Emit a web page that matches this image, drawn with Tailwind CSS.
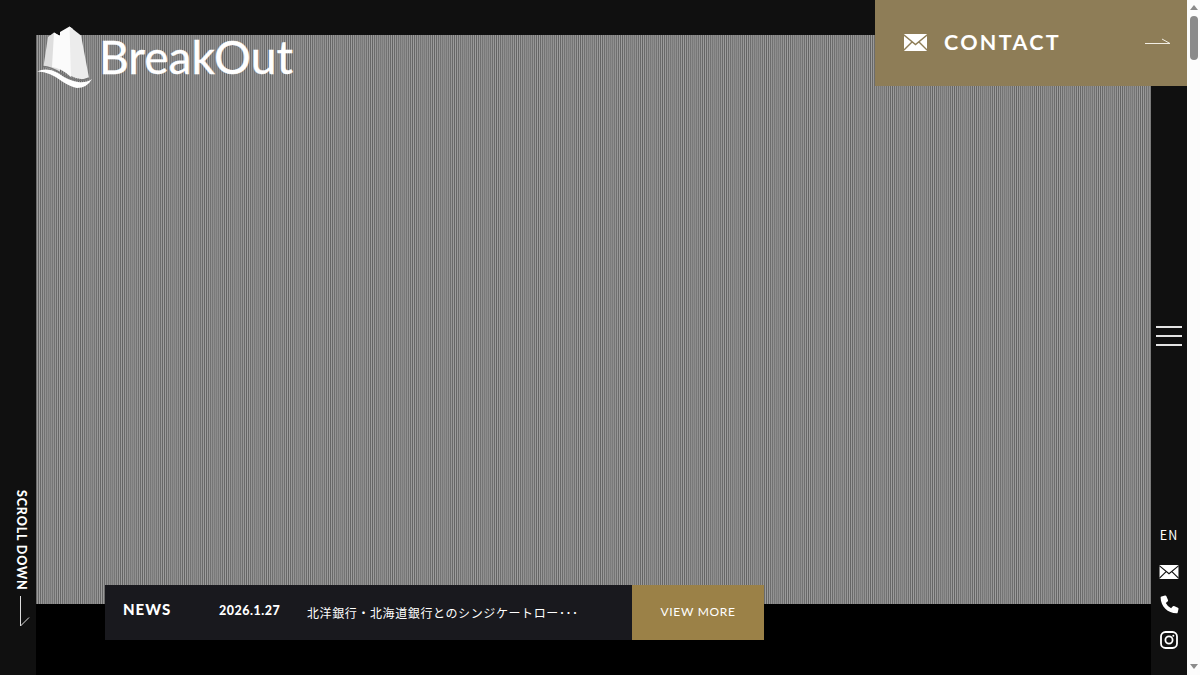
<!DOCTYPE html>
<html lang="ja">
<head>
    <meta charset="UTF-8">
    <meta name="viewport" content="width=device-width, initial-scale=1.0">
    <title>BreakOut</title>
    <script src="https://cdn.jsdelivr.net/npm/@tailwindcss/browser@4"></script>
</head>
<body class="bg-black font-[Lato,'Noto_Sans_CJK_JP',sans-serif] text-white">
    <div class="relative flex h-screen overflow-hidden">

        <!-- Left bar -->
        <aside class="flex w-9 shrink-0 flex-col items-center bg-[#101010] pt-[490px]">
            <p class="ml-[5px] h-[101px] whitespace-nowrap text-[12.5px] leading-4 font-black tracking-[.85px] [writing-mode:vertical-rl]">SCROLL DOWN</p>
            <svg class="ml-[11px] mt-[4px]" width="12" height="33" viewBox="0 0 12 33" fill="none" stroke="#ddd" stroke-width="1">
                <path d="M2.5 1V31L11 22.5"/>
            </svg>
        </aside>

        <!-- Main visual -->
        <main class="flex min-w-0 flex-1 flex-col border-t-[35px] border-[#101010] bg-black">
            <!-- fine stripes, fading in and out every 20.8px -->
            <div class="h-[569px] shrink-0 bg-[repeating-linear-gradient(90deg,#858585c8_-7.4px,#85858500_3px,#858585c8_13.4px),repeating-linear-gradient(90deg,#646464_0px,#646464_1px,#9e9e9e_1px,#9e9e9e_2px)]"></div>
            <div class="relative -mt-[19px] ml-[69px] flex h-[55px] w-[659px]">
                <div class="flex flex-1 items-center bg-[#19191e] pl-[18px]">
                    <h2 class="w-[96px] pb-1.5 text-[15px] font-black tracking-[1px]">NEWS</h2>
                    <time class="w-[88px] pb-0.5 text-[12.5px] font-black tracking-[.5px]">2026.1.27</time>
                    <p class="whitespace-nowrap pt-0.5 text-[12px] tracking-[.6px]">北洋銀行・北海道銀行とのシンジケートロー･･･</p>
                </div>
                <a class="flex w-[132px] items-center justify-center bg-[#9b8147] pb-px text-[12px] tracking-[.7px]">VIEW MORE</a>
            </div>
        </main>

        <!-- Right bar -->
        <nav class="flex w-9 shrink-0 flex-col items-center bg-[#101010] pt-[326px]">
            <div class="flex w-[26px] flex-col gap-[7px]">
                <span class="h-0.5 bg-[#e4e4e4]"></span>
                <span class="h-0.5 bg-[#e4e4e4]"></span>
                <span class="h-0.5 bg-[#e4e4e4]"></span>
            </div>
            <span class="mt-[179px] h-5 text-[12.5px] leading-5 tracking-[1px] font-['Noto_Sans_CJK_JP',sans-serif]">EN</span>
            <svg class="mt-[20px]" width="20" height="14" viewBox="0 0 23 17">
                <rect width="23" height="17" rx="1" fill="#fff"/>
                <path d="M0 1L11.5 10.5L23 1M0 16L8 8M23 16L15 8" fill="none" stroke="#101010" stroke-width="1.4"/>
            </svg>
            <svg class="mt-[16px]" width="19" height="19" viewBox="0 0 19 19" fill="#fff">
                <path d="M1.5 1.5L5 .5Q6 .3 6.4 1.2L8 5Q8.3 5.8 7.6 6.4L5.8 7.9Q7.5 11.4 11.1 13.2L12.6 11.4Q13.2 10.7 14 11L17.9 12.7Q18.7 13.1 18.5 14L17.7 17.4Q17.5 18.2 16.6 18.3C7.8 18.2 .8 11.5 .6 2.5Q.6 1.7 1.5 1.5Z"/>
            </svg>
            <svg class="mt-[17px]" width="18" height="18" viewBox="0 0 18 18" fill="none" stroke="#fff" stroke-width="1.8">
                <rect x="1" y="1" width="16" height="16" rx="4.5"/>
                <circle cx="9" cy="9" r="3.6"/>
                <circle cx="13.3" cy="4.7" r="1" fill="#fff" stroke="none"/>
            </svg>
        </nav>

        <!-- Scrollbar -->
        <div class="flex w-[13px] shrink-0 flex-col items-center justify-between bg-[#fcfcfc] pt-[5px] pb-[6px]">
            <div class="flex flex-col items-center gap-[6px]">
                <svg width="8" height="5" viewBox="0 0 8 5" fill="#8b8b8b"><path d="M0 5L4 0L8 5Z"/></svg>
                <span class="h-[44px] w-2 rounded-full bg-[#8b8b8b]"></span>
            </div>
            <svg width="8" height="5" viewBox="0 0 8 5" fill="#8b8b8b"><path d="M0 0L4 5L8 0Z"/></svg>
        </div>

        <!-- Logo -->
        <svg class="absolute top-[22px] left-[34px]" width="264" height="70" viewBox="34 22 264 70">
            <path d="M48 37L54 32.5L60 36V72L43.5 66.5Z" fill="#dedede"/>
            <path d="M54 32.5L60 36V32L69.5 26.5L73 29L71 77Q61 68 52 67Z" fill="#fbfbfb"/>
            <path d="M69.5 26.5L81 35.5L89 78Q80 81 71 76Z" fill="#ececec"/>
            <path d="M43 66.5C56 66 64 79 77 80Q84 81 89 78" fill="none" stroke="#777" stroke-width="1.5"/>
            <path d="M37 71.5Q47 67 58 73Q69 81 78 82Q86 83 92 79Q87 88 77 88Q71 87 63 82Q49 71 37 71.5Z" fill="#fff"/>
            <text x="99" y="73.5" textLength="194" lengthAdjust="spacingAndGlyphs" font-family="Lato" font-size="46" fill="#fff" stroke="#fff" stroke-width=".4">BreakOut</text>
        </svg>

        <!-- Contact -->
        <a class="absolute top-0 right-[13px] flex h-[86px] w-[312px] items-center bg-[#8e7d57] pb-[2px] pl-[29px] pr-[15px]">
            <svg class="mt-px" width="23" height="17" viewBox="0 0 23 17">
                <rect width="23" height="17" rx="1" fill="#fff"/>
                <path d="M0 1L11.5 10.5L23 1M0 16L8 8M23 16L15 8" fill="none" stroke="#8e7d57" stroke-width="1.4"/>
            </svg>
            <span class="ml-[17px] text-[21.5px] font-bold tracking-[2.3px]">CONTACT</span>
            <svg class="ml-auto" width="28" height="8" viewBox="0 0 28 8" fill="none" stroke="#f2eee4" stroke-width="1">
                <path d="M1 5.5H26L18 1"/>
            </svg>
        </a>
    </div>
</body>
</html>
